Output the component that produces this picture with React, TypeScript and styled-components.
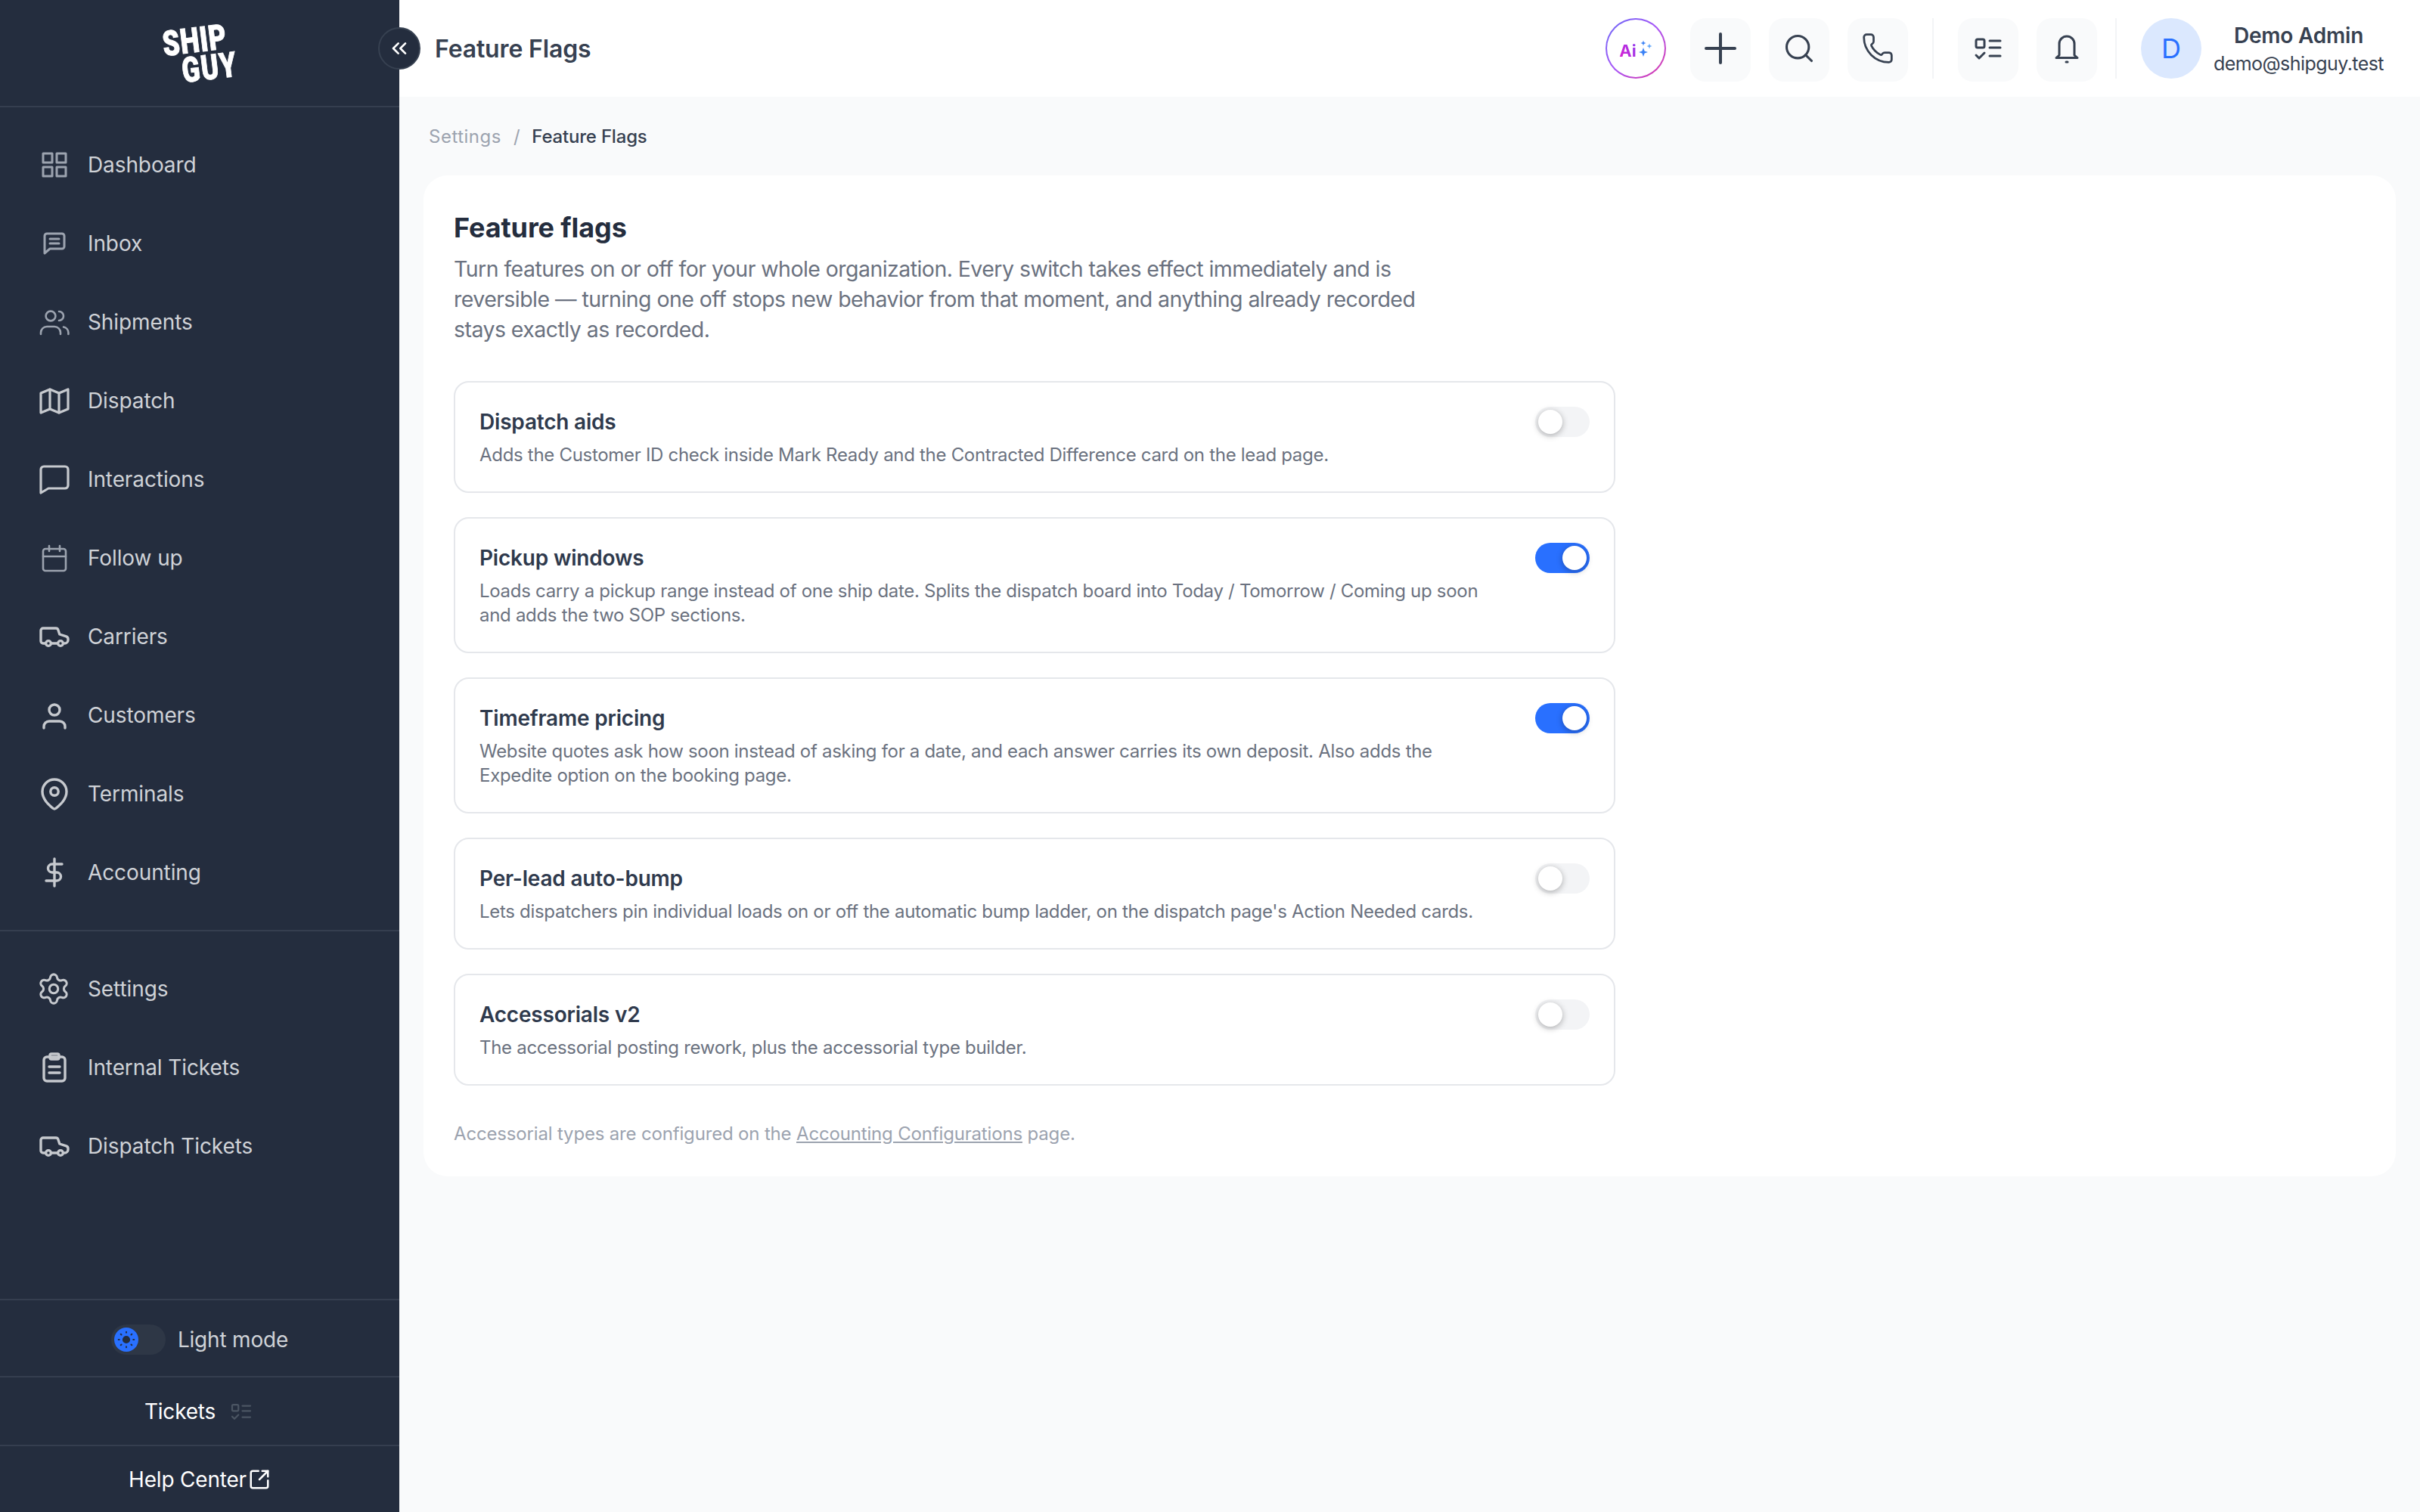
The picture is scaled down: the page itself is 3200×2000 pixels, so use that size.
import styled, { createGlobalStyle } from "styled-components";
import { ChevronsLeft, Phone, Search, Settings, SquareArrowOutUpRight } from "lucide-react";
import type { ReactNode } from "react";

const font = `Inter, "Liberation Sans", sans-serif`;

const GlobalStyle = createGlobalStyle`
  html, body {
    margin: 0;
    padding: 0;
    background: #f9fafb;
    font-family: ${font};
  }
  * { box-sizing: border-box; }
`;

const Page = styled.div`
  width: 3200px;
  height: 2000px;
  display: flex;
  overflow: hidden;
  background: #f9fafb;
`;

const Sidebar = styled.aside`
  width: 528px;
  flex: none;
  display: flex;
  flex-direction: column;
  background: #242d3e;
`;

const LogoBar = styled.div`
  height: 142px;
  flex: none;
  display: flex;
  align-items: center;
  justify-content: center;
  border-bottom: 2px solid #353e4f;
`;

const Logo = styled.div`
  display: flex;
  flex-direction: column;
  margin-left: 24px;
  color: #fff;
  font-family: Roboto, sans-serif;
  font-weight: 900;
  line-height: 38px;
  -webkit-text-stroke: 1px #fff;
  transform: rotate(-7deg);
  span {
    font-size: 46px;
    display: block;
    transform-origin: left center;
  }
  span:first-child {
    transform: scaleX(0.78);
    letter-spacing: 1px;
  }
  span:last-child {
    transform: scaleX(0.76);
    margin-left: 21px;
    letter-spacing: 2px;
  }
`;

const NavGroup = styled.nav`
  padding: 24px 0;
  display: flex;
  flex-direction: column;
  border-bottom: ${(p) => (p.$last ? "none" : "2px solid #353e4f")};
`;

const NavRow = styled.a`
  height: 104px;
  display: flex;
  align-items: center;
  padding-left: 48px;
  gap: 20px;
  color: #cfd2d7;
  font-size: 28px;
  letter-spacing: -0.1px;
`;

const NavIcon = styled.svg`
  width: 48px;
  height: 48px;
  flex: none;
  fill: none;
  stroke: ${(p) => (p.$dim ? "#9ca3af" : "#c6c9ce")};
  stroke-width: ${(p) => p.$sw || 1.6};
  stroke-linecap: round;
  stroke-linejoin: round;
`;

const GearIcon = styled(Settings)`
  width: 46px;
  height: 46px;
  flex: none;
  margin-right: 2px;
  color: #c6c9ce;
`;

const SideFooter = styled.div`
  margin-top: auto;
  display: flex;
  flex-direction: column;
`;

const FooterRow = styled.div`
  height: ${(p) => p.$h}px;
  padding-top: ${(p) => p.$top || 0}px;
  display: flex;
  align-items: center;
  justify-content: center;
  gap: ${(p) => p.$gap}px;
  border-top: 2px solid #353e4f;
  color: ${(p) => p.$color};
  font-size: 28px;
  letter-spacing: -0.2px;
`;

const ModeSwitch = styled.div`
  width: 72px;
  height: 40px;
  padding: 4px;
  border-radius: 20px;
  background: #2e3746;
  display: flex;
`;

const ModeKnob = styled.div`
  width: 32px;
  height: 32px;
  border-radius: 50%;
  background: #2970ff;
  display: flex;
  align-items: center;
  justify-content: center;
`;

const Main = styled.div`
  flex: 1;
  min-width: 0;
  display: flex;
  flex-direction: column;
`;

const Header = styled.header`
  height: 128px;
  flex: none;
  position: relative;
  display: flex;
  align-items: center;
  padding: 0 48px 0 47px;
  background: #fff;
`;

const Collapse = styled.button`
  position: absolute;
  left: -28px;
  top: 36px;
  width: 56px;
  height: 56px;
  padding: 0;
  border-radius: 50%;
  border: 2px solid #374151;
  background: #242d3e;
  color: #fff;
  display: flex;
  align-items: center;
  justify-content: center;
`;

const PageTitle = styled.h1`
  margin: 0;
  font-size: 32px;
  font-weight: 600;
  color: #374151;
  letter-spacing: -0.15px;
`;

const HeaderTools = styled.div`
  margin-left: auto;
  height: 128px;
  padding-top: 24px;
  display: flex;
  align-items: flex-start;
`;

const AiButton = styled.div`
  width: 80px;
  height: 80px;
  border-radius: 50%;
  padding: 2px;
  margin-right: 32px;
  background: linear-gradient(135deg, #6a6cf6, #a855f7 50%, #e0369f);
  div {
    width: 100%;
    height: 100%;
    border-radius: 50%;
    background: #fff;
    display: flex;
    align-items: center;
    justify-content: center;
    gap: 1px;
  }
`;

const AiText = styled.span`
  font-size: 22px;
  font-weight: 700;
  line-height: 24px;
  margin-top: 6px;
  background: linear-gradient(60deg, #e11fd0, #8b3cf0);
  -webkit-background-clip: text;
  background-clip: text;
  color: transparent;
`;

const ToolGroup = styled.div`
  display: flex;
  gap: 24px;
`;

const ToolButton = styled.button`
  width: 80px;
  height: 84px;
  padding: 0 0 4px;
  border: 0;
  border-radius: 20px;
  background: #f9fafb;
  color: #374151;
  display: flex;
  align-items: center;
  justify-content: center;
`;

const ToolIcon = styled.svg`
  width: 48px;
  height: 48px;
  fill: none;
  stroke: currentColor;
  stroke-width: ${(p) => p.$sw || 1.5};
  stroke-linecap: round;
  stroke-linejoin: round;
`;

const TicketIcon = styled(ToolIcon)`
  width: 36px;
  height: 36px;
  color: #4b5563;
`;

const Rule = styled.div`
  width: 2px;
  height: 80px;
  margin: 0 ${(p) => p.$right}px 0 ${(p) => p.$left}px;
  background: #f3f4f6;
`;

const Avatar = styled.div`
  width: 80px;
  height: 80px;
  border-radius: 50%;
  background: #dbe8fe;
  color: #2970ff;
  font-size: 36px;
  display: flex;
  align-items: center;
  justify-content: center;
  margin-right: 16px;
`;

const UserInfo = styled.div`
  margin-top: 5px;
  display: flex;
  flex-direction: column;
  align-items: center;
  gap: 1px;
  color: #374151;
  strong {
    font-size: 28px;
    font-weight: 600;
    line-height: 36px;
    letter-spacing: -0.2px;
  }
  span {
    font-size: 25px;
    line-height: 36px;
    letter-spacing: -0.55px;
  }
`;

const Content = styled.main`
  flex: 1;
  padding: 0 32px;
`;

const Crumbs = styled.div`
  height: 104px;
  display: flex;
  align-items: center;
  gap: 16px;
  padding-left: 7px;
  font-size: 24px;
  letter-spacing: -0.2px;
  color: #9ca3af;
  em {
    font-style: normal;
    letter-spacing: 0.5px;
  }
  b {
    font-weight: 500;
    color: #374151;
  }
`;

const Panel = styled.section`
  padding: 40px;
  border-radius: 32px;
  background: #fff;
`;

const Title = styled.h2`
  margin: 0;
  font-size: 36px;
  line-height: 56px;
  padding-top: 1px;
  font-weight: 700;
  color: #242d3e;
  letter-spacing: -0.1px;
`;

const Lead = styled.p`
  margin: 7px 0 48px;
  max-width: 1344px;
  font-size: 28.5px;
  line-height: 40px;
  color: #6b7280;
  letter-spacing: -0.55px;
`;

const FlagList = styled.div`
  width: 1536px;
  display: flex;
  flex-direction: column;
  gap: 32px;
`;

const FlagCard = styled.div`
  display: flex;
  align-items: flex-start;
  justify-content: space-between;
  gap: 48px;
  padding: 32px;
  border: 2px solid #e5e7eb;
  border-radius: 20px;
`;

const FlagText = styled.div`
  min-width: 0;
  flex: 1;
`;

const FlagName = styled.div`
  font-size: 28px;
  line-height: 40px;
  font-weight: 600;
  color: #2f3a4d;
  letter-spacing: -0.2px;
`;

const FlagDesc = styled.div`
  margin-top: 8px;
  font-size: 24px;
  line-height: 32px;
  color: #6b7280;
  letter-spacing: -0.3px;
`;

const Toggle = styled.div`
  width: 72px;
  height: 40px;
  flex: none;
  padding: 4px;
  border-radius: 20px;
  display: flex;
  justify-content: ${(p) => (p.$on ? "flex-end" : "flex-start")};
  background: ${(p) => (p.$on ? "#2970ff" : "#f3f4f6")};
`;

const Knob = styled.span`
  width: 32px;
  height: 32px;
  border-radius: 50%;
  background: #fff;
  box-shadow: 0 2px 8px rgba(0, 0, 0, 0.3);
`;

const Note = styled.p`
  margin: 48px 0 0;
  font-size: 24px;
  line-height: 32px;
  color: #9ca3af;
  letter-spacing: -0.17px;
  a {
    color: inherit;
    text-decoration: underline;
  }
`;

function Ico({ children, dim, sw }: { children: ReactNode; dim?: boolean; sw?: number }) {
  return (
    <NavIcon viewBox="0 0 24 24" $dim={dim} $sw={sw}>
      {children}
    </NavIcon>
  );
}

const truck = (
  <Ico sw={1.7}>
    <path d="M6.200 16.500H4.500A1.500 1.500 0 0 1 3 15V8a1.500 1.500 0 0 1 1.500-1.500H13a1.500 1.500 0 0 1 1.400 1l1 3 4.400 1.400a1.800 1.800 0 0 1 1.200 1.700v.6a2.300 2.300 0 0 1-2.300 2.300" />
    <path d="M10 16.500h4" />
    <circle cx="8" cy="16.500" r="1.700" />
    <circle cx="16" cy="16.500" r="1.700" />
  </Ico>
);

const mainNav: { label: string; icon: ReactNode }[] = [
  {
    label: "Dashboard",
    icon: (
      <Ico dim sw={1.5}>
        <rect x="4.500" y="4.500" width="6" height="6" />
        <rect x="13.500" y="4.500" width="6" height="6" />
        <rect x="4.500" y="13.500" width="6" height="6" />
        <rect x="13.500" y="13.500" width="6" height="6" />
      </Ico>
    ),
  },
  {
    label: "Inbox",
    icon: (
      <Ico dim sw={1.5}>
        <path d="M5.500 7a1.500 1.500 0 0 1 1.500-1.500h10A1.500 1.500 0 0 1 18.500 7v7a1.500 1.500 0 0 1-1.500 1.500H9l-3.500 3z" />
        <path d="M9 9h6M9 12h6" />
      </Ico>
    ),
  },
  {
    label: "Shipments",
    icon: (
      <Ico dim sw={1.3}>
        <circle cx="9.500" cy="8" r="3.200" />
        <path d="M15 5a3 3 0 0 1 0 6" />
        <path d="M3 20v-1a4 4 0 0 1 4-4h5a4 4 0 0 1 4 4v1" />
        <path d="M18 15.300a4 4 0 0 1 3.200 3.700v1" />
      </Ico>
    ),
  },
  {
    label: "Dispatch",
    icon: (
      <Ico sw={1.6}>
        <path d="M3 7l6-2.500L15 7l6-2.500v13L15 20l-6-2.500L3 20z" />
        <path d="M9 4.500v13M15 7v13" />
      </Ico>
    ),
  },
  {
    label: "Interactions",
    icon: (
      <Ico sw={1.6}>
        <path d="M3 5.500a2 2 0 0 1 2-2h14a2 2 0 0 1 2 2V16a2 2 0 0 1-2 2H8l-5 3z" />
      </Ico>
    ),
  },
  {
    label: "Follow up",
    icon: (
      <Ico dim sw={1.3}>
        <rect x="4.500" y="6" width="15" height="14.500" rx="1.500" />
        <path d="M4.500 11h15M8.500 4v3.500M15.500 4v3.500" />
      </Ico>
    ),
  },
  { label: "Carriers", icon: truck },
  {
    label: "Customers",
    icon: (
      <Ico sw={1.7}>
        <circle cx="12" cy="8.500" r="3.500" />
        <path d="M5 20.500V19.500A3.500 3.500 0 0 1 8.500 16h7a3.500 3.500 0 0 1 3.500 3.500v1" />
      </Ico>
    ),
  },
  {
    label: "Terminals",
    icon: (
      <Ico sw={1.7}>
        <path d="M12 22c-.4 0-.7-.2-1-.4C8 19 4 15.500 4 10.500a8 8 0 0 1 16 0c0 5-4 8.500-7 11.100-.3.2-.6.4-1 .4z" />
        <circle cx="12" cy="10.500" r="2.600" />
      </Ico>
    ),
  },
  {
    label: "Accounting",
    icon: (
      <Ico sw={1.7}>
        <path d="M12 3v18" />
        <path d="M17 6.500h-6.500a2.750 2.750 0 0 0 0 5.500h3a2.750 2.750 0 0 1 0 5.500H6.500" />
      </Ico>
    ),
  },
];

const lowerNav: { label: string; icon: ReactNode }[] = [
  { label: "Settings", icon: <GearIcon strokeWidth={1.6} /> },
  {
    label: "Internal Tickets",
    icon: (
      <Ico sw={1.7}>
        <rect x="5" y="5" width="14" height="16" rx="2" />
        <rect x="9" y="3" width="6" height="3.500" rx="1" />
        <path d="M8.500 11.500h7M8.500 15.500h7" />
      </Ico>
    ),
  },
  { label: "Dispatch Tickets", icon: truck },
];

const flags = [
  {
    name: "Dispatch aids",
    desc: "Adds the Customer ID check inside Mark Ready and the Contracted Difference card on the lead page.",
    on: false,
  },
  {
    name: "Pickup windows",
    desc: "Loads carry a pickup range instead of one ship date. Splits the dispatch board into Today / Tomorrow / Coming up soon and adds the two SOP sections.",
    on: true,
  },
  {
    name: "Timeframe pricing",
    desc: "Website quotes ask how soon instead of asking for a date, and each answer carries its own deposit. Also adds the Expedite option on the booking page.",
    on: true,
  },
  {
    name: "Per-lead auto-bump",
    desc: "Lets dispatchers pin individual loads on or off the automatic bump ladder, on the dispatch page's Action Needed cards.",
    on: false,
  },
  {
    name: "Accessorials v2",
    desc: "The accessorial posting rework, plus the accessorial type builder.",
    on: false,
  },
];

const checklist = (
  <>
    <rect x="4" y="6" width="5.500" height="5.500" rx="1" />
    <path d="M13 7h7M13 11.500h7M13 17h7" />
    <path d="M4 16.500l2 2 3.500-3.500" />
  </>
);

export default function App() {
  return (
    <Page>
      <GlobalStyle />
      <Sidebar>
        <LogoBar>
          <Logo>
            <span>SHIP</span>
            <span>GUY</span>
          </Logo>
        </LogoBar>
        <NavGroup>
          {mainNav.map((item) => (
            <NavRow key={item.label}>
              {item.icon}
              {item.label}
            </NavRow>
          ))}
        </NavGroup>
        <NavGroup $last>
          {lowerNav.map((item) => (
            <NavRow key={item.label}>
              {item.icon}
              {item.label}
            </NavRow>
          ))}
        </NavGroup>
        <SideFooter>
          <FooterRow $h={102} $top={3} $gap={16} $color="#cfd2d7">
            <ModeSwitch>
              <ModeKnob>
                <svg width="26" height="26" viewBox="0 0 24 24" fill="none" stroke="#242d3e" strokeWidth="1.800" strokeLinecap="round">
                  <circle cx="12" cy="12" r="3.800" fill="#242d3e" />
                  <path d="M12 2.500v1M12 20.500v1M2.500 12h1M20.500 12h1M5.300 5.300l.7.7M18 18l.7.7M5.300 18.700l.7-.7M18 6l.7-.7" />
                </svg>
              </ModeKnob>
            </ModeSwitch>
            Light mode
          </FooterRow>
          <FooterRow $h={91} $gap={16} $color="#fff">
            Tickets
            <TicketIcon viewBox="0 0 24 24">{checklist}</TicketIcon>
          </FooterRow>
          <FooterRow $h={89} $gap={2} $color="#fff">
            Help Center
            <SquareArrowOutUpRight size={30} strokeWidth={2} />
          </FooterRow>
        </SideFooter>
      </Sidebar>
      <Main>
        <Header>
          <Collapse>
            <ChevronsLeft size={32} strokeWidth={2} />
          </Collapse>
          <PageTitle>Feature Flags</PageTitle>
          <HeaderTools>
            <AiButton>
              <div>
                <AiText>Ai</AiText>
                <svg width="20" height="24" viewBox="0 0 20 24" fill="#3b82f6">
                  <path d="M8 11l1.600 4.400L14 17l-4.400 1.600L8 23l-1.600-4.400L2 17l4.400-1.600z" />
                  <path d="M8 1.500l.9 2.600 2.600.9-2.600.9L8 8.500l-.9-2.600L4.500 5l2.600-.9z" />
                  <path d="M16 5.500l.9 2.600 2.600.9-2.600.9-.9 2.600-.9-2.600L12.500 9l2.600-.9z" fill="#60a5fa" />
                </svg>
              </div>
            </AiButton>
            <ToolGroup>
              <ToolButton>
                <ToolIcon viewBox="0 0 24 24" $sw={2}>
                  <path d="M12 2.500v19M2.500 12h19" />
                </ToolIcon>
              </ToolButton>
              <ToolButton>
                <Search size={44} strokeWidth={1.7} />
              </ToolButton>
              <ToolButton>
                <Phone size={44} strokeWidth={1.5} />
              </ToolButton>
            </ToolGroup>
            <Rule $left={32} $right={32} />
            <ToolGroup>
              <ToolButton>
                <ToolIcon viewBox="0 0 24 24">{checklist}</ToolIcon>
              </ToolButton>
              <ToolButton>
                <ToolIcon viewBox="0 0 24 24">
                  <path d="M7 16.500V9a5 5 0 0 1 10 0v7.500l2 1.800H5z" />
                  <path d="M11.500 21h1" />
                </ToolIcon>
              </ToolButton>
            </ToolGroup>
            <Rule $left={24} $right={32} />
            <Avatar>D</Avatar>
            <UserInfo>
              <strong>Demo Admin</strong>
              <span>demo@shipguy.test</span>
            </UserInfo>
          </HeaderTools>
        </Header>
        <Content>
          <Crumbs>
            <em>Settings</em>
            <span>/</span>
            <b>Feature Flags</b>
          </Crumbs>
          <Panel>
            <Title>Feature flags</Title>
            <Lead>
              Turn features on or off for your whole organization. Every switch takes effect immediately and is reversible — turning one off stops new behavior from that moment, and anything already recorded stays exactly as recorded.
            </Lead>
            <FlagList>
              {flags.map((f) => (
                <FlagCard key={f.name}>
                  <FlagText>
                    <FlagName>{f.name}</FlagName>
                    <FlagDesc>{f.desc}</FlagDesc>
                  </FlagText>
                  <Toggle $on={f.on}>
                    <Knob />
                  </Toggle>
                </FlagCard>
              ))}
            </FlagList>
            <Note>
              Accessorial types are configured on the <a>Accounting Configurations</a> page.
            </Note>
          </Panel>
        </Content>
      </Main>
    </Page>
  );
}
